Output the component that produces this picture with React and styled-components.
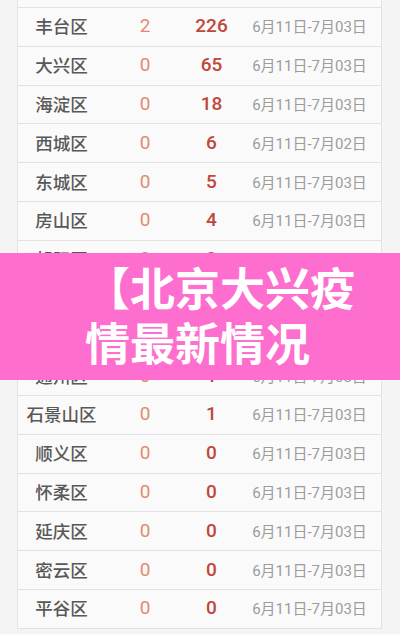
import React from 'react';
import styled, { createGlobalStyle } from 'styled-components';

const GlobalStyle = createGlobalStyle`
  body {
    margin: 0;
    background: #f4f4f4;
    font-family: Roboto, "Noto Sans CJK SC", sans-serif;
  }
`;

const Page = styled.div`
  position: relative;
  width: 400px;
  height: 634px;
  overflow: hidden;
  background: #f4f4f4;
`;

const Table = styled.div`
  margin-left: 17px;
  width: 365px;
  background: #fafafa;
  border-left: 1px solid #e3e3e3;
  border-right: 1px solid #e3e3e3;
  box-sizing: border-box;
`;

const TopStrip = styled.div`
  height: 7px;
  border-bottom: 1px solid #e2e2e2;
`;

const Row = styled.div`
  display: grid;
  grid-template-columns: 87px 80px 53px 1fr;
  align-items: center;
  height: 37.8px;
  border-bottom: 1px solid #e2e2e2;
`;

const Name = styled.div`
  text-align: center;
  font-family: "Noto Sans CJK SC", sans-serif;
  font-weight: 500;
  font-size: 17.5px;
  color: #585858;
  margin-top: -2px;
`;

const Num = styled.div`
  text-align: center;
  font-family: Roboto, sans-serif;
  font-size: 19px;
  font-weight: ${(p) => (p.$total ? 500 : 400)};
  color: ${(p) => (p.$total ? '#c0473b' : '#e08c6c')};
  margin-top: -2px;
`;

const DateText = styled.div`
  text-align: center;
  font-family: Roboto, "Noto Sans CJK SC", sans-serif;
  font-size: 15px;
  color: #9c9c9c;
  margin-top: -2px;
`;

const Banner = styled.div`
  position: absolute;
  left: 0;
  top: 253px;
  width: 400px;
  height: 127px;
  background: #fd6ecf;
  box-sizing: border-box;
  padding: 6px 0 0 85px;
`;

const BannerText = styled.div`
  width: 272px;
  font-family: "Noto Sans CJK SC", sans-serif;
  font-weight: 700;
  font-size: 45px;
  line-height: 55px;
  color: #fff;
  word-break: break-all;
`;

const rows = [
  ['丰台区', 2, 226, '6月11日-7月03日'],
  ['大兴区', 0, 65, '6月11日-7月03日'],
  ['海淀区', 0, 18, '6月11日-7月03日'],
  ['西城区', 0, 6, '6月11日-7月02日'],
  ['东城区', 0, 5, '6月11日-7月03日'],
  ['房山区', 0, 4, '6月11日-7月03日'],
  ['朝阳区', 0, 3, '6月11日-7月03日'],
  ['昌平区', 0, 3, '6月11日-7月03日'],
  ['门头沟区', 0, 2, '6月11日-7月03日'],
  ['通州区', 0, 1, '6月11日-7月03日'],
  ['石景山区', 0, 1, '6月11日-7月03日'],
  ['顺义区', 0, 0, '6月11日-7月03日'],
  ['怀柔区', 0, 0, '6月11日-7月03日'],
  ['延庆区', 0, 0, '6月11日-7月03日'],
  ['密云区', 0, 0, '6月11日-7月03日'],
  ['平谷区', 0, 0, '6月11日-7月03日'],
];

const App = () => (
  <Page>
    <GlobalStyle />
    <Table>
      <TopStrip />
      {rows.map(([name, added, total, range]) => (
        <Row key={name}>
          <Name>{name}</Name>
          <Num>{added}</Num>
          <Num $total>{total}</Num>
          <DateText>{range}</DateText>
        </Row>
      ))}
    </Table>
    <Banner>
      <BannerText>【北京大兴疫情最新情况</BannerText>
    </Banner>
  </Page>
);

export default App;
